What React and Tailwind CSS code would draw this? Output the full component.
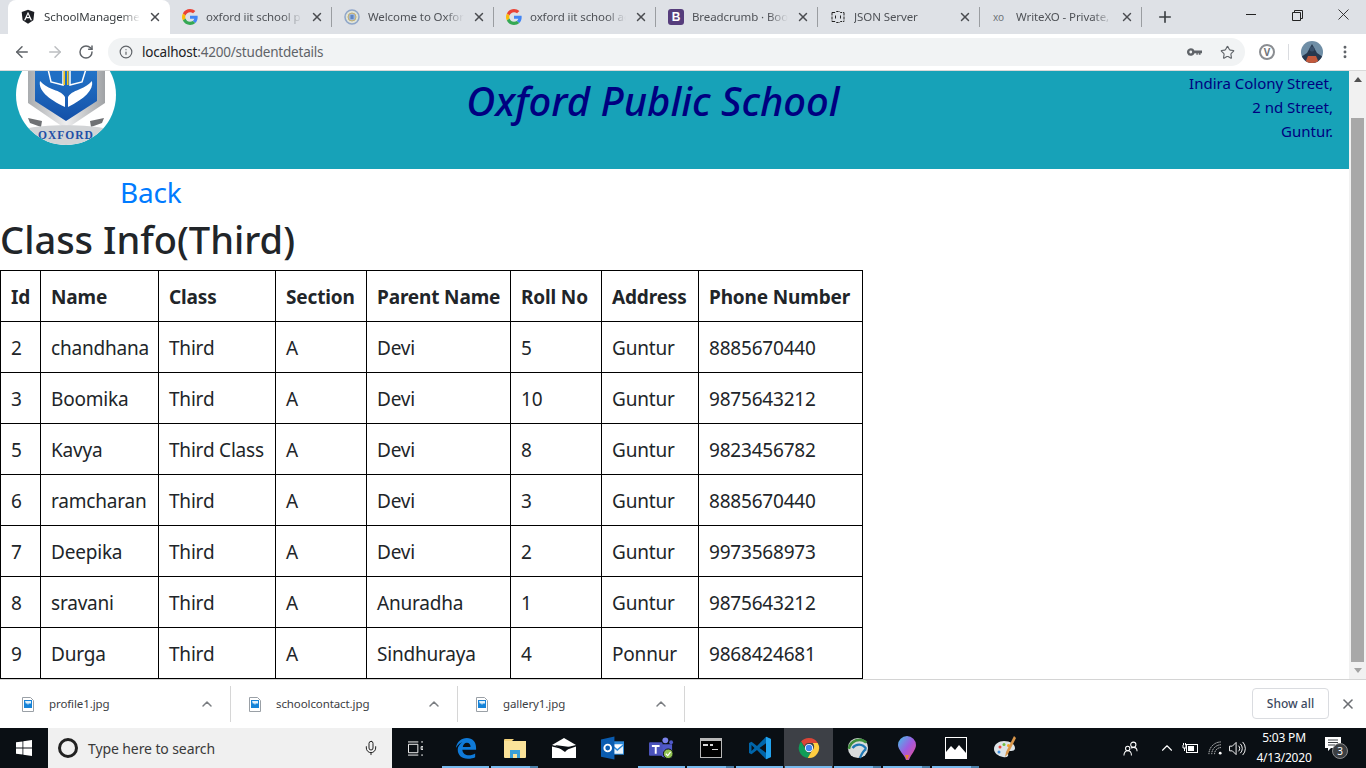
import { ArrowLeft, ArrowRight, RotateCw, Info, Star, X, Plus, ChevronUp, Mic, MoreVertical } from 'lucide-react'

const FONT = 'font-["Noto_Sans","Open_Sans",sans-serif]'

const tabs = [
  { title: 'oxford iit school p', icon: 'g' },
  { title: 'Welcome to Oxfor', icon: 'crest' },
  { title: 'oxford iit school ac', icon: 'g' },
  { title: 'Breadcrumb · Boot', icon: 'b' },
  { title: 'JSON Server', icon: 'json' },
  { title: 'WriteXO - Private,', icon: 'xo' },
]

const students = [
  [2, 'chandhana', 'Third', 'A', 'Devi', 5, 'Guntur', '8885670440'],
  [3, 'Boomika', 'Third', 'A', 'Devi', 10, 'Guntur', '9875643212'],
  [5, 'Kavya', 'Third Class', 'A', 'Devi', 8, 'Guntur', '9823456782'],
  [6, 'ramcharan', 'Third', 'A', 'Devi', 3, 'Guntur', '8885670440'],
  [7, 'Deepika', 'Third', 'A', 'Devi', 2, 'Guntur', '9973568973'],
  [8, 'sravani', 'Third', 'A', 'Anuradha', 1, 'Guntur', '9875643212'],
  [9, 'Durga', 'Third', 'A', 'Sindhuraya', 4, 'Ponnur', '9868424681'],
]

const headers = ['Id', 'Name', 'Class', 'Section', 'Parent Name', 'Roll No', 'Address', 'Phone Number']
const colWidths = ['w-[40px]', 'w-[118px]', 'w-[117px]', 'w-[91px]', 'w-[144px]', 'w-[91px]', 'w-[97px]', 'w-[164px]']

function GoogleIcon() {
  return (
    <svg viewBox="0 0 48 48" className="w-4 h-4 shrink-0">
      <path fill="#EA4335" d="M24 9.5c3.5 0 6.700 1.200 9.200 3.600l6.900-6.900C35.900 2.400 30.400 0 24 0 14.600 0 6.500 5.400 2.600 13.200l8 6.200C12.500 13.600 17.800 9.500 24 9.500z" />
      <path fill="#4285F4" d="M47 24.500c0-1.600-.1-3.100-.4-4.500H24v9h12.900c-.6 3-2.300 5.500-4.800 7.200l7.700 6C44.300 38 47 31.800 47 24.500z" />
      <path fill="#FBBC05" d="M10.600 28.600c-.5-1.400-.8-3-.8-4.600s.3-3.200.8-4.600l-8-6.200C.9 16.500 0 20.100 0 24s.9 7.500 2.600 10.800l8-6.200z" />
      <path fill="#34A853" d="M24 48c6.500 0 11.900-2.100 15.900-5.800l-7.700-6c-2.200 1.500-5 2.300-8.200 2.300-6.200 0-11.500-4.100-13.400-9.900l-8 6.200C6.500 42.600 14.600 48 24 48z" />
    </svg>
  )
}

function TabIcon({ type }) {
  if (type === 'g') return <GoogleIcon />
  if (type === 'crest') {
    return (
      <svg viewBox="0 0 16 16" className="w-4 h-4 shrink-0">
        <circle cx="8" cy="8" r="7" fill="#dfe3d8" stroke="#8fa6c9" strokeWidth="1.500" />
        <circle cx="8" cy="8" r="4" fill="#9db6dc" stroke="#c9b16c" />
        <rect x="6.500" y="6" width="3" height="4" fill="#5f86c2" />
      </svg>
    )
  }
  if (type === 'b') {
    return (
      <div className="w-4 h-4 shrink-0 rounded-[3px] bg-[#563d7c] flex items-center justify-center text-white text-[12px] font-bold leading-none font-['Liberation_Sans',sans-serif]">
        B
      </div>
    )
  }
  if (type === 'json') {
    return (
      <svg viewBox="0 0 16 16" className="w-4 h-4 shrink-0" fill="none" stroke="#222" strokeWidth="1">
        <path d="M2 3.500h3.500l1-1h3l1 1H14M2 12.500h3.500l1 1h3l1-1H14M2 3.500v9M14 3.500v9" strokeDasharray="3 1" />
        <path d="M5.500 6.500v3M10.500 6.500v3" />
      </svg>
    )
  }
  return <span className="w-3 shrink-0 ml-[1px] mr-[3px] text-[10px] leading-none text-[#70757a]">xo</span>
}

function ChromeTab({ title, icon, active, last }) {
  return (
    <div className={`relative h-[34px] w-[162px] shrink-0 flex items-center pl-[12px] pr-[8px] gap-2 ${active ? 'bg-white rounded-t-lg' : ''}`}>
      {active ? (
        <svg viewBox="0 0 24 24" className="w-4 h-4 shrink-0">
          <path fill="#1d1f24" d="M12 1 2.500 4.400 4 17l8 5 8-5 1.500-12.600z" />
          <path fill="#fff" d="M12 4 6 17h2.200l1.200-3h5.200l1.200 3H18zm-1.700 8L12 8l1.700 4z" />
        </svg>
      ) : (
        <TabIcon type={icon} />
      )}
      <span className={`flex-1 min-w-0 whitespace-nowrap text-[11.5px] tracking-[-0.1px] [mask-image:linear-gradient(to_right,black_80%,transparent)] ${active ? 'text-[#3c4043]' : 'text-[#4f5257]'}`}>
        {title}
      </span>
      <X size={14} strokeWidth={2.5} className="shrink-0 text-[#4a4c50]" />
      {!active && !last && <div className="absolute right-0 top-[7px] h-[20px] w-px bg-[#9a9da1]" />}
      {last && <div className="absolute right-0 top-[7px] h-[20px] w-px bg-[#9a9da1]" />}
    </div>
  )
}

function TabBar() {
  return (
    <div className="h-[34px] bg-[#dee1e6] flex items-stretch">
      <div className="flex pl-[8px]">
        <ChromeTab active title="SchoolManageme" />
        {tabs.map((t, i) => (
          <ChromeTab key={t.title} title={t.title} icon={t.icon} last={i === tabs.length - 1} />
        ))}
      </div>
      <div className="ml-[14px] flex items-center">
        <Plus size={18} strokeWidth={2.2} className="text-[#3c4043]" />
      </div>
      <div className="ml-auto flex h-full">
        <div className="w-[46px] flex items-start justify-center pt-[14px]"><div className="w-[10px] h-px bg-[#222]" /></div>
        <div className="w-[46px] flex items-start justify-center pt-[10px]">
          <svg viewBox="0 0 11 11" className="w-[11px] h-[11px]" fill="none" stroke="#222">
            <path d="M.5 2.500h8v8h-8zM2.500 2.500v-2h8v8h-2" />
          </svg>
        </div>
        <div className="w-[46px] flex items-start justify-center pt-[9px]">
          <svg viewBox="0 0 11 11" className="w-[11px] h-[11px]" stroke="#222" strokeWidth="0.9"><path d="M.5.500l10 10M10.500.500l-10 10" /></svg>
        </div>
      </div>
    </div>
  )
}

function Toolbar() {
  return (
    <div className="h-[37px] bg-white border-b border-[#d9d9d9] flex items-center">
      <ArrowLeft size={18} strokeWidth={2} className="ml-[13px] text-[#5f6368]" />
      <ArrowRight size={18} strokeWidth={2} className="ml-[15px] text-[#bcbec1]" />
      <RotateCw size={16} strokeWidth={2.2} className="ml-[14px] text-[#5f6368]" />
      <div className="ml-[14px] w-[1137px] h-[28px] rounded-full bg-[#f1f3f4] flex items-center pl-[11px]">
        <Info size={14} strokeWidth={2} className="text-[#5f6368]" />
        <span className="ml-[9px] text-[13.5px] tracking-[-0.2px] text-[#202124]">
          localhost<span className="text-[#5f6368]">:4200/studentdetails</span>
        </span>
        <svg viewBox="0 0 16 10" className="ml-auto w-[15px] h-[10px]" fill="#5f6368">
          <path fillRule="evenodd" d="M4 1a4 4 0 1 1-3.800 5.200A4 4 0 0 1 4 1zm0 2.500a1.500 1.500 0 1 0 0 3 1.500 1.500 0 0 0 0-3z" />
          <path d="M7 3.500h9v2.700h-1.500V8h-2V6.200h-1V8h-1.500V6.200H7z" />
        </svg>
        <Star size={15} strokeWidth={1.8} className="ml-[18px] mr-[10px] text-[#5f6368]" />
      </div>
      <div className="ml-[14px] w-[16px] h-[16px] rounded-full border-2 border-[#8a8d91] flex items-center justify-center text-[10px] font-bold leading-none text-[#70757a]">
        V
      </div>
      <div className="ml-[13px] w-px h-[16px] bg-[#dadce0]" />
      <svg viewBox="0 0 22 22" className="ml-[12px] w-[22px] h-[22px] shrink-0">
        <clipPath id="avatar"><circle cx="11" cy="11" r="11" /></clipPath>
        <g clipPath="url(#avatar)">
          <rect width="22" height="22" fill="#6f8ea6" />
          <path d="M0 16l6-4 5-9 5 9 6 4v6H0z" fill="#27384e" />
          <path d="M4 22l3-7h8l3 7z" fill="#c2593c" />
          <circle cx="11" cy="8" r="2.500" fill="#38506b" />
        </g>
      </svg>
      <MoreVertical size={16} strokeWidth={2.4} className="ml-[14px] text-[#5f6368]" />
    </div>
  )
}

function SchoolLogo() {
  return (
    <div className="-mt-[26px] ml-[16px] w-[100px] h-[100px] shrink-0 rounded-full bg-white overflow-hidden">
      <svg viewBox="0 0 100 100" className="w-[100px] h-[100px]">
        <defs>
          <linearGradient id="frame" x1="0" y1="0" x2="1" y2="0">
            <stop offset="0" stopColor="#a9acaf" />
            <stop offset="0.5" stopColor="#eeeeef" />
            <stop offset="1" stopColor="#9fa2a5" />
          </linearGradient>
          <linearGradient id="blue" x1="0" y1="0" x2="0" y2="1">
            <stop offset="0" stopColor="#2a86d8" />
            <stop offset="1" stopColor="#1450a8" />
          </linearGradient>
        </defs>
        <path d="M12 0h77v58L50 84 12 58z" fill="url(#frame)" />
        <path d="M19 0h62v56L50 76 19 56z" fill="url(#blue)" />
        <path d="M32 24h15v16l-12-3zM70 24H54v16l12-3z" fill="#1f6fc4" stroke="#fff" strokeWidth="1.500" />
        <path d="M47.500 24h1.500v16h-1.500zM51 24h1.500v16H51z" fill="#f0c419" />
        <path d="M24 36c-2 9 8 18 25 26V52c-3-5-8-6-13-8-5-2-8-4-12-8zM76 36c2 9-8 18-24 26V52c3-5 8-6 12-8 5-2 8-4 12-8z" fill="#fff" />
        <path d="M12 73l14 3-1 6-11-4zM88 73l-14 3 1 6 11-4z" fill="#6f7174" />
        <path d="M10 84c14-5 66-5 80 0-8 11-24 16-40 16S18 95 10 84z" fill="#d2d4d6" />
        <text x="50" y="94" textAnchor="middle" fontSize="11.500" fontWeight="700" letterSpacing="1" fill="#1f4fa6" fontFamily="Liberation Serif, serif">OXFORD</text>
      </svg>
    </div>
  )
}

function Page() {
  return (
    <div className="flex-1 min-w-0 overflow-hidden bg-white text-[#212529]">
      <div className="relative h-[98px] bg-[#17a2b8] flex text-[#000080]">
        <SchoolLogo />
        <div className="absolute left-0 right-[43px] top-[4px] text-center text-[40px] leading-[52px] italic font-medium">
          Oxford Public School
        </div>
        <div className="ml-auto pr-[16px] text-right text-[15px] leading-[24px]">
          <div>Indira Colony Street,</div>
          <div>2 nd Street,</div>
          <div>Guntur.</div>
        </div>
      </div>
      <div className="pl-[120px] pt-[1px] h-[47px] text-[28px] leading-[44px] tracking-[-0.2px] text-[#007bff]">Back</div>
      <h1 className="h-[54px] text-[38px] leading-[46px] font-medium">Class Info(Third)</h1>
      <table className="table-fixed border-collapse w-[862px] text-[19px]">
        <thead>
          <tr className="h-[51px]">
            {headers.map((h, i) => (
              <th key={h} className={`${colWidths[i]} border border-black pl-[10px] pr-0 pt-[2px] text-left font-bold whitespace-nowrap tracking-[-0.15px]`}>{h}</th>
            ))}
          </tr>
        </thead>
        <tbody>
          {students.map((row) => (
            <tr key={row[0]} className="h-[51px]">
              {row.map((cell, i) => (
                <td key={i} className="border border-black pl-[10px] pr-0 pt-[2px] whitespace-nowrap tracking-[-0.2px]">{cell}</td>
              ))}
            </tr>
          ))}
        </tbody>
      </table>
    </div>
  )
}

function Scrollbar() {
  return (
    <div className="w-[17px] shrink-0 bg-[#f1f1f1] flex flex-col items-center">
      <div className="h-[17px] flex items-center justify-center">
        <div className="border-x-[4px] border-x-transparent border-b-[5px] border-b-[#505050]" />
      </div>
      <div className="mt-[30px] w-[13px] flex-1 bg-[#a8a8a8]" />
      <div className="h-[17px] flex items-center justify-center">
        <div className="border-x-[4px] border-x-transparent border-t-[5px] border-t-[#a3a3a3]" />
      </div>
    </div>
  )
}

function FileIcon() {
  return (
    <svg viewBox="0 0 12 15" className="w-[12px] h-[15px] shrink-0">
      <path d="M.5.500h8l3 3v11H.5z" fill="#fff" stroke="#9aa0a6" />
      <rect x="2" y="3" width="8" height="8" fill="#1683d8" />
      <path d="M3 4h6v2l-1 1-1-1-1 2-1-2-1 1z" fill="#dff0fb" />
    </svg>
  )
}

function DownloadItem({ name, first }) {
  return (
    <div className={`h-[36px] border-r border-[#d6d6d6] flex items-center pr-[15px] ${first ? 'w-[231px] pl-[22px]' : 'w-[227px] pl-[18px]'}`}>
      <FileIcon />
      <span className="ml-[15px] text-[11.5px] tracking-[-0.1px] text-[#3c4043]">{name}</span>
      <ChevronUp size={16} strokeWidth={2.2} className="ml-auto text-[#7a7d81]" />
    </div>
  )
}

function DownloadBar() {
  return (
    <div className="h-[49px] shrink-0 bg-white border-t border-[#d4d4d4] flex items-center">
      <div className="flex">
        <DownloadItem first name="profile1.jpg" />
        <DownloadItem name="schoolcontact.jpg" />
        <DownloadItem name="gallery1.jpg" />
      </div>
      <div className="ml-auto w-[77px] h-[31px] -mt-[1px] rounded-[4px] border border-[#dadce0] flex items-center justify-center text-[12px] font-medium text-[#3c4a60]">
        Show all
      </div>
      <X size={16} strokeWidth={2.4} className="ml-[11px] mr-[10px] text-[#6b6e72]" />
    </div>
  )
}

function TaskIcon({ children, running, stacked, active }) {
  return (
    <div className={`relative w-[49px] h-[40px] shrink-0 flex items-center justify-center ${active ? 'bg-[#3d4046]' : ''}`}>
      {children}
      {running && (
        <div className="absolute bottom-0 left-[1px] right-[1px] h-[2px] flex">
          <div className="flex-1 bg-[#76b9ed]" />
          {stacked && <div className="w-[8px] bg-[#4a7fa8]" />}
        </div>
      )}
    </div>
  )
}

function Taskbar() {
  return (
    <div className={`h-[40px] shrink-0 bg-[#0a0f14] flex items-center text-white ${FONT}`}>
      <div className="w-[48px] flex justify-center">
        <svg viewBox="0 0 16 16" className="w-[16px] h-[16px]" fill="#fff">
          <path d="M0 2.300 6.500 1.400v6.200H0zM7.300 1.300 16 0v7.600H7.300zM0 8.400h6.500v6.200L0 13.700zM7.300 8.400H16V16l-8.700-1.300z" />
        </svg>
      </div>
      <div className="w-[344px] h-[40px] bg-[#f0f0f0] flex items-center pl-[10px] pr-[13px] text-[#3a3a3a]">
        <div className="w-[20px] h-[20px] rounded-full border-[3px] border-[#222]" />
        <span className="ml-[10px] text-[14px] tracking-[-0.1px]">Type here to search</span>
        <Mic size={16} strokeWidth={1.5} className="ml-auto text-[#222]" />
      </div>
      <TaskIcon>
        <svg viewBox="0 0 16 16" className="w-[15px] h-[15px] -ml-[2px]" fill="none" stroke="#fff" strokeWidth="1">
          <path d="M.500 3.500h10v9H.500zM0 1h11M0 15h11M14 1h2M14 6h2v3h-2zM14 15h2" />
        </svg>
      </TaskIcon>
      <TaskIcon running>
        <svg viewBox="0 0 24 24" className="w-[22px] h-[22px]">
          <path fill="#0f7ad8" d="M1 12C2 5 7 1 13 1c6 0 10 4 10 11v2H8c.3 4 3.500 6 7 6 3 0 5-.7 7-2v4c-2 1-4.500 1.700-8 1.700-7 0-11-4-11-9.700 0-1 .1-2 .4-2.700C5 8 7 6 10 5 6 6 3 8.500 1 12zm7.500-1H17c0-3-1.500-4.800-4-4.800S9 8 8.500 11z" />
        </svg>
      </TaskIcon>
      <TaskIcon running stacked>
        <svg viewBox="0 0 24 20" className="w-[24px] h-[20px]">
          <path fill="#f3d27a" d="M1 3h8l2-2H2a1 1 0 0 0-1 1z" />
          <path fill="#fbe39a" d="M1 3h22v16a1 1 0 0 1-1 1H2a1 1 0 0 1-1-1z" />
          <path fill="#3aa0d8" d="M7 20v-8h10v8h-3v-4h-4v4z" />
        </svg>
      </TaskIcon>
      <TaskIcon>
        <svg viewBox="0 0 24 20" className="w-[24px] h-[20px]" fill="#fff">
          <path d="M0 7 12 0l12 7-12 3z" />
          <path d="M0 8.500 14 12 24 8.500V20H0z" />
          <path d="M3 7l15 2-5 5z" fill="#0a0f14" />
        </svg>
      </TaskIcon>
      <TaskIcon>
        <svg viewBox="0 0 24 24" className="w-[23px] h-[24px]">
          <rect x="10" y="5" width="14" height="14" fill="#2b88d8" />
          <path d="M11 8h12l-6 5z" fill="#fff" />
          <path d="M11 10l6 5 6-5v8H11z" fill="#e8f3fb" />
          <path d="M0 3 14 0v24L0 21z" fill="#0a5cb0" />
          <circle cx="7" cy="12" r="3.500" fill="none" stroke="#fff" strokeWidth="2" />
        </svg>
      </TaskIcon>
      <TaskIcon running>
        <svg viewBox="0 0 26 24" className="w-[25px] h-[24px]">
          <circle cx="17" cy="4" r="3" fill="#7b83eb" />
          <circle cx="23" cy="6" r="2" fill="#5059c9" />
          <path d="M12 8h12v9a5 5 0 0 1-5 5h-2a5 5 0 0 1-5-5z" fill="#5059c9" />
          <rect x="0" y="6" width="14" height="14" rx="1" fill="#4b53bc" />
          <path d="M3 9h8v2H8v7H6v-7H3z" fill="#fff" />
          <circle cx="20" cy="18" r="5" fill="#92c353" stroke="#0a0f14" />
          <path d="M17.500 18l2 2 3-4" fill="none" stroke="#fff" strokeWidth="1.200" />
        </svg>
      </TaskIcon>
      <TaskIcon running stacked>
        <svg viewBox="0 0 22 20" className="w-[22px] h-[20px]">
          <rect width="22" height="20" fill="#b8b8b8" />
          <rect x="1" y="3" width="20" height="16" fill="#000" />
          <path d="M3 6h5v2H3zM10 6h3v2h-3zM12 11h6v1h-6z" fill="#d8d8d8" />
        </svg>
      </TaskIcon>
      <TaskIcon running>
        <svg viewBox="0 0 24 24" className="w-[24px] h-[24px]">
          <path fill="#0065a9" d="M18 .800 9 10 3.500 5.700 1 7v10l2.500 1.300L9 14l9 9.200 5-2.300V3.100zM3.500 15V9l3 3zm14.500 1.800L11.500 12 18 7.200z" />
          <path fill="#22a3ee" d="M18 .800l5 2.300v17.800l-5 2.300V16.800V7.200z" />
        </svg>
      </TaskIcon>
      <TaskIcon running active>
        <svg viewBox="0 0 24 24" className="w-[22px] h-[22px]">
          <path fill="#db4437" d="M12 1a11 11 0 0 1 9.500 5.500H12a5.500 5.500 0 0 0-5.200 3.700L3.300 5A11 11 0 0 1 12 1z" />
          <path fill="#0f9d58" d="M3.300 5l4.800 8.300a5.500 5.500 0 0 0 5.900 4l-3.400 5.600A11 11 0 0 1 3.300 5z" />
          <path fill="#ffcd40" d="M21.500 6.500A11 11 0 0 1 10.600 22.900l4.700-8.100A5.500 5.500 0 0 0 16 6.500z" />
          <circle cx="12" cy="12" r="4.500" fill="#fff" />
          <circle cx="12" cy="12" r="3.500" fill="#4285f4" />
        </svg>
      </TaskIcon>
      <TaskIcon running stacked>
        <svg viewBox="0 0 24 24" className="w-[22px] h-[22px]" fill="none">
          <circle cx="12" cy="12" r="11" fill="#d9dcdc" />
          <path d="M2 13C4 4 14 0 21 6" stroke="#3f8f3c" strokeWidth="3" />
          <path d="M6 12c4-5 11-5 15 1M14 23c2-4 3-8 7-10" stroke="#1f77b4" strokeWidth="2.500" />
        </svg>
      </TaskIcon>
      <TaskIcon running stacked>
        <svg viewBox="0 0 18 24" className="w-[18px] h-[24px]">
          <defs>
            <linearGradient id="drop" x1="0" y1="0" x2="1" y2="1">
              <stop offset="0" stopColor="#3fc4e8" />
              <stop offset="0.5" stopColor="#a05be0" />
              <stop offset="1" stopColor="#ef4d8c" />
            </linearGradient>
          </defs>
          <path d="M9 0a9 9 0 0 1 9 9c0 5-5 9-7 15H8C6 18 0 14 0 9a9 9 0 0 1 9-9z" fill="url(#drop)" />
          <path d="M7 19h4l-2 5z" fill="#e8842c" />
        </svg>
      </TaskIcon>
      <TaskIcon running stacked>
        <svg viewBox="0 0 22 22" className="w-[22px] h-[22px]">
          <rect x="0.500" y="0.500" width="21" height="21" fill="#0a0f14" stroke="#fff" />
          <path d="M1 21V15l5-6 4 4 4-5 7 8v5z" fill="#fff" />
        </svg>
      </TaskIcon>
      <TaskIcon>
        <svg viewBox="0 0 24 24" className="w-[24px] h-[24px]">
          <path d="M1 13c0-5 5-8 10-8 6 0 11 3 11 7 0 3-3 3-6 3-2 0-2 2-1 3 1 2-1 4-5 3-5-1-9-4-9-8z" fill="#dde4e8" />
          <circle cx="7" cy="11" r="1.500" fill="#e8483f" />
          <circle cx="11" cy="8.500" r="1.500" fill="#72bf44" />
          <circle cx="15.500" cy="9.500" r="1.500" fill="#f5a623" />
          <circle cx="6" cy="16" r="1.500" fill="#3f8fe0" />
          <path d="M21 0l2 2-8 16-3 3 1-5z" fill="#d9964a" />
        </svg>
      </TaskIcon>
      <div className="ml-auto flex items-center h-full">
        <svg viewBox="0 0 16 16" className="w-[15px] h-[15px]" fill="none" stroke="#fff" strokeWidth="1.100">
          <circle cx="11" cy="4" r="2.800" />
          <circle cx="5" cy="8" r="2.300" />
          <path d="M1 15.500c0-3 1.500-5 4-5s4 2 4 5M8.500 7.500c1-.5 2-.7 2.500-.7 2 0 4 1.500 4 4" />
        </svg>
        <ChevronUp size={18} strokeWidth={1.5} className="ml-[20px]" />
        <svg viewBox="0 0 16 12" className="ml-[6px] w-[16px] h-[12px]" fill="none" stroke="#fff">
          <rect x="4.500" y="2.500" width="11" height="8" />
          <rect x="6" y="4" width="6" height="5" fill="#fff" stroke="none" />
          <path d="M1 3v3h3V3M2.500 6v3M1.500 1v2M3.500 1v2" />
        </svg>
        <svg viewBox="0 0 16 16" className="ml-[10px] w-[15px] h-[15px]" fill="none" stroke="#d8d8d8">
          <path d="M1 14a13 13 0 0 1 13-13M4 14A10 10 0 0 1 14 4M7 14a7 7 0 0 1 7-7" strokeDasharray="1.500 0.800" />
          <circle cx="13" cy="13" r="1.500" fill="#fff" stroke="none" />
        </svg>
        <svg viewBox="0 0 18 16" className="ml-[6px] w-[17px] h-[15px]" fill="none" stroke="#fff">
          <path d="M.5 5.500h3l4-4v13l-4-4h-3zM10 5a4 4 0 0 1 0 6M12 3a7 7 0 0 1 0 10M14.500 1a10 10 0 0 1 0 14" />
        </svg>
        <div className="ml-[8px] w-[60px] text-center text-[12px] leading-[20px] tracking-[-0.2px]">
          <div>5:03 PM</div>
          <div>4/13/2020</div>
        </div>
        <div className="relative ml-[11px] mr-[19px] w-[22px] h-[24px]">
          <svg viewBox="0 0 16 14" className="w-[16px] h-[14px] mt-[1px]" fill="#fff">
            <path d="M0 0h16v11H6l-3 3v-3H0z" />
            <path d="M3 3h10M3 5.500h10M3 8h7" stroke="#0a0f14" strokeWidth="0.800" />
          </svg>
          <div className="absolute left-[7px] top-[7px] w-[16px] h-[16px] rounded-full bg-[#3b3e42] border border-[#8a8a8a] flex items-center justify-center text-[10px] leading-none">
            3
          </div>
        </div>
      </div>
    </div>
  )
}

export default function App() {
  return (
    <div className={`w-[1366px] h-[768px] overflow-hidden flex flex-col ${FONT}`}>
      <TabBar />
      <Toolbar />
      <div className="flex-1 min-h-0 flex">
        <Page />
        <Scrollbar />
      </div>
      <DownloadBar />
      <Taskbar />
    </div>
  )
}
